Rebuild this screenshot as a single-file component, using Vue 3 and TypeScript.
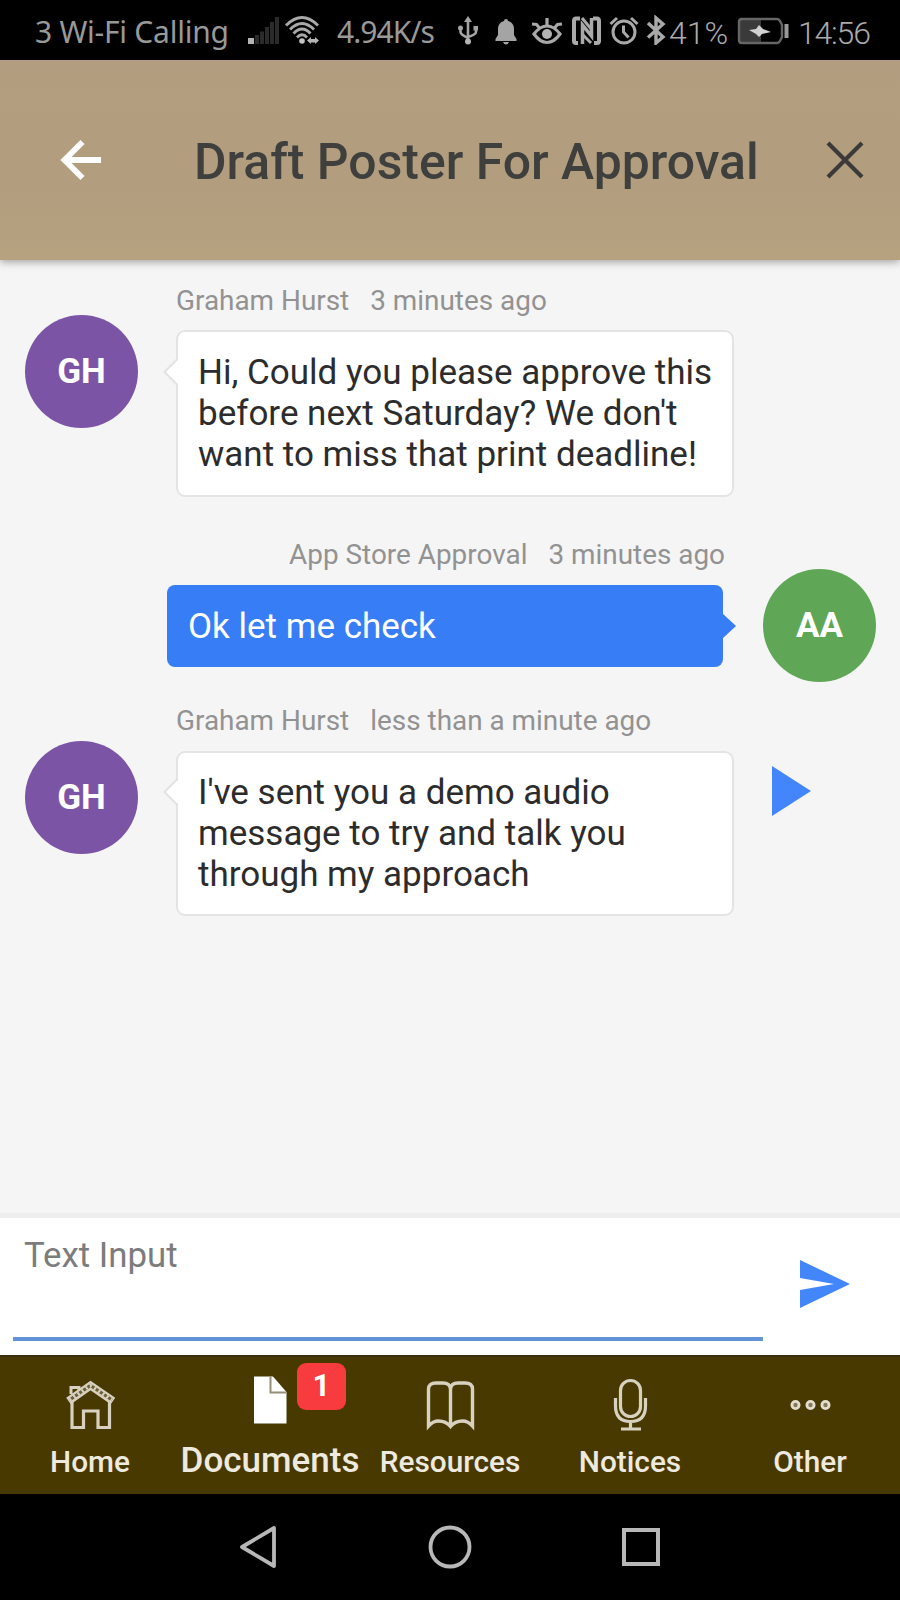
<script setup lang="ts">
interface Message {
  id: number
  author: string
  initials: string
  time: string
  text: string
  own: boolean
  audio: boolean
}

interface Tab {
  name: string
  icon: 'home' | 'document' | 'book' | 'mic' | 'more'
  badge?: number
  active?: boolean
}

const messages: Message[] = [
  {
    id: 1,
    author: 'Graham Hurst',
    initials: 'GH',
    time: '3 minutes ago',
    text: "Hi, Could you please approve this before next Saturday? We don't want to miss that print deadline!",
    own: false,
    audio: false,
  },
  {
    id: 2,
    author: 'App Store Approval',
    initials: 'AA',
    time: '3 minutes ago',
    text: 'Ok let me check',
    own: true,
    audio: false,
  },
  {
    id: 3,
    author: 'Graham Hurst',
    initials: 'GH',
    time: 'less than a minute ago',
    text: "I've sent you a demo audio message to try and talk you through my approach",
    own: false,
    audio: true,
  },
]

const tabs: Tab[] = [
  { name: 'Home', icon: 'home' },
  { name: 'Documents', icon: 'document', badge: 1, active: true },
  { name: 'Resources', icon: 'book' },
  { name: 'Notices', icon: 'mic' },
  { name: 'Other', icon: 'more' },
]
</script>

<template>
  <div class="screen">
    <div class="status">
      <span class="carrier">3 Wi-Fi Calling</span>
      <svg class="signal" width="36" height="30" viewBox="0 0 36 30">
        <rect x="3" y="23" width="6" height="6" fill="#b4b4b4" />
        <path d="M12 29V20M17 29V16.500M22 29V12M27 29V7M32 29V2" stroke="#2b2b2b" stroke-width="4" />
      </svg>
      <svg class="wifi" width="38" height="30" viewBox="0 0 38 30">
        <g fill="none" stroke="#a9a9a9" stroke-width="2.800">
          <path d="M3 10.500Q19-5.500 35 10.500" />
          <path d="M7 14.500Q19 2.500 31 14.500" />
          <path d="M10.500 18.500Q19 9.500 27.500 18.500" />
          <path d="M14 22.500Q19 17 24 22.500" />
        </g>
        <circle cx="19" cy="26" r="2.800" fill="#c4c4c4" />
        <path d="M24 25.500l4-3.500v2h4v-2l4 3.500-4 3.500v-1.500h-4V29z" fill="#b4b4b4" />
      </svg>
      <span class="speed">4.94K/s</span>
      <svg class="usb" width="24" height="30" viewBox="0 0 24 30">
        <g fill="none" stroke="#a4a4a4" stroke-width="2.600">
          <path d="M12 5V25M4.500 13v4q0 2.500 7.500 6M20 13v4q0 2.500-8 5" />
        </g>
        <path d="M12 1l4 6H8z" fill="#a4a4a4" />
        <circle cx="12" cy="26.500" r="3" fill="#b4b4b4" />
        <circle cx="4.500" cy="13" r="2.500" fill="#a4a4a4" />
        <rect x="17.500" y="11" width="4.500" height="4.500" fill="#a4a4a4" />
      </svg>
      <svg class="bell" width="24" height="30" viewBox="0 0 24 30">
        <path d="M12 4a2 2 0 0 1 2 2c4 1 6 4 6 8v6l2.500 4v2h-21v-2l2.500-4v-6c0-4 2-7 6-8a2 2 0 0 1 2-2zM9 27h6q-1 2.500-3 2.500T9 27z" fill="#a4a4a4" />
      </svg>
      <svg class="eye" width="34" height="30" viewBox="0 0 34 30">
        <g fill="none" stroke="#a9a9a9" stroke-width="3.200">
          <path d="M4 19Q10 11 17 11T30 19Q24 27.500 17 27.500T4 19z" />
          <path d="M17 3V10M9.500 13L6.500 9.500 2 9M24.500 13L27.500 9.500l4.500-.5" />
        </g>
        <circle cx="17" cy="19" r="5" fill="#b4b4b4" />
      </svg>
      <svg class="nfc" width="31" height="30" viewBox="0 0 31 30">
        <g fill="none" stroke="#a9a9a9">
          <path d="M9 3.500H5Q3 3.500 3 6V26Q3 28 5 28H7M22 3.500h4q2 0 2 2.500V26q0 2-2 2H23" stroke-width="4" />
          <path d="M11.500 29V10l9 11V3" stroke-width="3.500" />
          <path d="M11 3l10 12M12 20l8 8" stroke-width="3" />
        </g>
      </svg>
      <svg class="alarm" width="32" height="30" viewBox="0 0 32 30">
        <g fill="none" stroke="#a9a9a9" stroke-width="3">
          <circle cx="16" cy="17" r="11" />
          <path d="M2.500 9L9 3M29.500 9L23 3M15.500 10.500V17l5 5.500" />
        </g>
      </svg>
      <svg class="bluetooth" width="21" height="30" viewBox="0 0 21 30">
        <path d="M2 8l15 14-7 6V3l7 6L2 22.500" fill="none" stroke="#a9a9a9" stroke-width="3.400" />
      </svg>
      <span class="percent">41%</span>
      <svg class="battery" width="54" height="30" viewBox="0 0 54 30">
        <rect x="3" y="5" width="22" height="22" fill="#3a3a3a" />
        <path d="M6 4H41q2 0 3 2l2 4V22l-2 4q-1 2-3 2H6q-3 0-3-3V7q0-3 3-3z" fill="none" stroke="#666" stroke-width="2.400" />
        <rect x="48.500" y="9" width="4" height="14" fill="#999" />
        <path d="M13 15l7-1 3-4 4 4 8 3-9 2-3 3-3-3z" fill="#d0d0d0" />
      </svg>
      <span class="clock">14:56</span>
    </div>

    <header class="header">
      <svg class="back" width="42" height="42" viewBox="0 0 42 42">
        <path d="M41 21H5M22.500 3L4.500 21l18 18" fill="none" stroke="#fff" stroke-width="5.800" />
      </svg>
      <h1 class="title">Draft Poster For Approval</h1>
      <svg class="close" width="38" height="38" viewBox="0 0 38 38">
        <path d="M2 2l34 34M36 2L2 36" fill="none" stroke="#3b3a38" stroke-width="4.200" />
      </svg>
    </header>

    <main class="chat">
      <article v-for="m in messages" :key="m.id" class="message" :class="{ own: m.own, audio: m.audio }">
        <div class="avatar">{{ m.initials }}</div>
        <div class="body">
          <div class="meta">
            <span>{{ m.author }}</span>
            <span>{{ m.time }}</span>
          </div>
          <div class="bubble">
            {{ m.text }}
            <svg v-if="m.own" class="pointer" width="14" height="26" viewBox="0 0 14 26">
              <path d="M0 0l14 13L0 26z" fill="#377df5" />
            </svg>
            <svg v-else class="pointer" width="16" height="28" viewBox="0 0 16 28">
              <path d="M16 0L2 14l14 14z" fill="#fff" />
              <path d="M14.500 1L1.500 14l13 13" fill="none" stroke="#e2e2e2" stroke-width="2" />
            </svg>
          </div>
        </div>
        <svg v-if="m.audio" class="play" width="40" height="50" viewBox="0 0 40 50">
          <path d="M0 0l39 25L0 50z" fill="#4386fb" />
        </svg>
      </article>
    </main>

    <section class="composer">
      <div class="field">Text Input</div>
      <svg class="send" width="51" height="48" viewBox="0 0 51 48">
        <path d="M0 0l50 24L0 48V30l34-6L0 18z" fill="#4386fb" />
      </svg>
    </section>

    <nav class="tabs">
      <div v-for="t in tabs" :key="t.name" class="tab" :class="{ active: t.active }">
        <svg v-if="t.icon === 'home'" width="60" height="60" viewBox="0 0 60 60">
          <g fill="none" stroke="#d8d1c0">
            <path d="M12 25V53.500H23.500V37H38V53.500H49.500V25" stroke-width="3.200" />
            <path d="M11 20V13.500h8v4" stroke-width="3" />
            <path d="M8.500 27L30.500 11.500 53 27" stroke-width="8" />
            <path d="M9.500 26L30.500 11.500 52 26" stroke="#6d6038" stroke-width="3.200" />
            <path d="M9.500 26L30.500 11.500 52 26" stroke-width="3.500" stroke-dasharray="2 3" />
          </g>
        </svg>
        <svg v-else-if="t.icon === 'document'" width="60" height="60" viewBox="0 0 60 60">
          <path d="M14 2.500H33L46.500 18V49.500H14z" fill="#fff" />
          <path d="M30.500 3V18.500H46" fill="none" stroke="#978e79" stroke-width="2" />
        </svg>
        <svg v-else-if="t.icon === 'book'" width="60" height="60" viewBox="0 0 60 60">
          <path
            d="M8.500 52V15Q8.500 9 16 9h7q7 0 7.500 6 .5-6 7.500-6h7q7.500 0 7.500 6V52Q48 47 42.500 47 35 47 30.500 52.500 26 47 18.500 47 13 47 8.500 52zM30.500 14V52"
            fill="none"
            stroke="#d8d1c0"
            stroke-width="3.400"
          />
        </svg>
        <svg v-else-if="t.icon === 'mic'" width="60" height="60" viewBox="0 0 60 60">
          <g fill="none" stroke="#d8d1c0" stroke-width="3.200">
            <rect x="20.500" y="6.500" width="20" height="36" rx="10" />
            <path d="M15.500 24v8q0 15.500 15 15.500t15-15.500V24M30.500 47v8M21 55H41" />
          </g>
        </svg>
        <svg v-else width="60" height="60" viewBox="0 0 60 60">
          <g fill="#85795a" stroke="#e4decf" stroke-width="2.800">
            <circle cx="15.500" cy="31" r="3.600" />
            <circle cx="30.500" cy="31" r="3.600" />
            <circle cx="45.500" cy="31" r="3.600" />
          </g>
        </svg>
        <span class="label">{{ t.name }}</span>
        <span v-if="t.badge" class="badge">{{ t.badge }}</span>
      </div>
    </nav>

    <div class="system">
      <svg width="42" height="48" viewBox="0 0 42 48">
        <path d="M36 5V43L4 24z" fill="none" stroke="#b8b8b8" stroke-width="3.800" stroke-linejoin="round" />
      </svg>
      <svg width="48" height="48" viewBox="0 0 48 48">
        <circle cx="24" cy="24" r="19.500" fill="none" stroke="#b8b8b8" stroke-width="3.800" />
      </svg>
      <svg width="40" height="48" viewBox="0 0 40 48">
        <rect x="3" y="7" width="34" height="34" fill="none" stroke="#b8b8b8" stroke-width="4" />
      </svg>
    </div>
  </div>
</template>

<style scoped>
.screen {
  display: flex;
  flex-direction: column;
  width: 900px;
  height: 1600px;
  overflow: hidden;
  background: #f5f5f5;
  font-family: Roboto, "Liberation Sans", sans-serif;
}
svg {
  display: block;
  flex: none;
}

.status {
  display: flex;
  align-items: center;
  height: 60px;
  flex: none;
  padding-left: 35px;
  background: #000;
  color: #999;
  white-space: nowrap;
}
.status span {
  flex: none;
  box-sizing: border-box;
  padding-top: 3px;
  font-size: 30px;
}
.carrier {
  width: 200px;
  font-family: "Noto Sans", sans-serif;
  letter-spacing: -0.25px;
}
.signal {
  margin-left: 10px;
}
.wifi {
  margin-left: 2px;
}
.speed {
  width: 105px;
  margin-left: 16px;
  font-family: "Noto Sans", sans-serif;
  letter-spacing: -0.95px;
}
.usb,
.bell {
  margin-left: 14px;
}
.eye {
  margin-left: 12px;
}
.nfc {
  margin-left: 7px;
}
.alarm,
.bluetooth {
  margin-left: 6px;
}
.status .percent,
.status .clock {
  padding-top: 5px;
  color: #aaa;
  font-size: 32px;
  font-weight: 300;
}
.percent {
  width: 66px;
  margin-left: 2px;
}
.battery {
  margin-left: 1px;
}
.clock {
  margin-left: 8px;
  letter-spacing: -1.2px;
}

.header {
  position: relative;
  display: flex;
  align-items: center;
  height: 200px;
  flex: none;
  box-sizing: border-box;
  padding-left: 60px;
  background: linear-gradient(#b29d80, #b29e7e 65%, #b6a27f);
  box-shadow: 0 2px 8px rgba(0, 0, 0, 0.35);
}
.title {
  width: 566px;
  margin: 3px 0 0 92px;
  color: #3f3f3d;
  font-size: 49.9px;
  font-weight: 500;
  line-height: 58px;
  white-space: nowrap;
}
.close {
  margin: 0 0 1px 66px;
}

.chat {
  flex: 1;
  padding-top: 23px;
  background: #f5f5f5;
}
.message {
  display: flex;
  align-items: flex-start;
  padding-left: 25px;
  margin-bottom: 40px;
}
.message.own {
  flex-direction: row-reverse;
  padding: 0 24px 0 0;
  margin-bottom: 21px;
}
.avatar {
  width: 113px;
  height: 113px;
  flex: none;
  margin-top: 32px;
  border-radius: 50%;
  background: #7c54a6;
  color: #fff;
  font-size: 35px;
  font-weight: 700;
  line-height: 113px;
  text-align: center;
}
.own .avatar {
  background: #5fa756;
}
.audio .avatar {
  margin-top: 38px;
}
.body {
  width: 558px;
  margin-left: 38px;
}
.own .body {
  width: 556px;
  margin: 0 40px 0 0;
}
.meta {
  display: flex;
  gap: 21px;
  margin-bottom: 13px;
  color: #929292;
  font-size: 27.9px;
  line-height: 35px;
  white-space: nowrap;
}
.message:not(.own):not(.audio) .meta {
  margin-bottom: 12px;
}
.own .meta {
  justify-content: flex-end;
  margin-right: -2px;
}
.bubble {
  position: relative;
  box-sizing: border-box;
  height: 167px;
  padding: 20px 18px 0 20px;
  border: 2px solid #e4e4e4;
  border-radius: 9px;
  background: #fff;
  color: #2c2c2c;
  font-size: 35px;
  line-height: 41px;
}
.own .bubble {
  height: 82px;
  padding: 21px 21px 0;
  border: 0;
  border-radius: 8px;
  background: #377df5;
  color: #fff;
}
.audio .bubble {
  height: 165px;
  padding-top: 19px;
}
.pointer {
  position: absolute;
  top: 26px;
  left: -15px;
}
.own .pointer {
  top: 28px;
  right: -13px;
  left: auto;
}
.audio .pointer {
  top: 25px;
}
.play {
  margin: 63px 0 0 38px;
}

.composer {
  display: flex;
  height: 135px;
  flex: none;
  padding: 0 0 2px 13px;
  border-top: 5px solid #eee;
  background: #fff;
}
.field {
  box-sizing: border-box;
  width: 750px;
  height: 123px;
  padding: 17px 0 0 11px;
  border-bottom: 4px solid #6292da;
  color: #7c7c7c;
  font-size: 34.8px;
  line-height: 41px;
}
.send {
  margin: 42px 0 0 37px;
}

.tabs {
  display: grid;
  grid-template-columns: repeat(5, 1fr);
  height: 139px;
  flex: none;
  box-sizing: border-box;
  border-top: 2px solid #3c2f08;
  background: #483900;
}
.tab {
  position: relative;
  display: flex;
  flex-direction: column;
  align-items: center;
  padding-top: 17px;
  color: #efeadf;
  font-size: 29.8px;
  font-weight: 500;
  white-space: nowrap;
}
.label {
  margin-top: 10px;
  line-height: 36px;
}
.active .label {
  margin-top: 9px;
  font-size: 35px;
  font-weight: 500;
}
.badge {
  position: absolute;
  top: 6px;
  left: 117px;
  width: 49px;
  height: 47px;
  border-radius: 9px;
  background: #f73b3e;
  color: #fff;
  font-size: 31px;
  font-weight: 700;
  line-height: 46px;
  text-align: center;
}

.system {
  display: flex;
  align-items: flex-start;
  height: 106px;
  flex: none;
  box-sizing: border-box;
  padding: 29px 0 0 238px;
  background: #000;
}
.system svg + svg {
  margin-left: 146px;
}
.system svg + svg + svg {
  margin-left: 147px;
}
</style>
